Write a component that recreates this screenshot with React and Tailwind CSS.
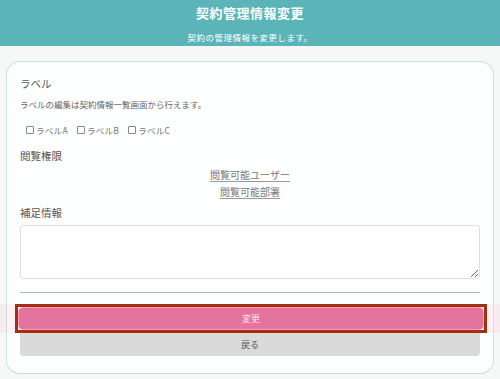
export default function App() {
  return (
    <div className="w-[500px] h-[379px] bg-[#f6f7f7] overflow-hidden font-['Noto_Sans_CJK_JP','Noto_Sans',sans-serif] text-[#555]">
      <header className="h-[46px] bg-[#5bb5b8] flex flex-col items-center text-white">
        <h1 className="mt-[3px] text-[13px] font-bold leading-[20px] tracking-[0.5px]">契約管理情報変更</h1>
        <p className="mt-[8px] text-[8.5px] leading-[12px] tracking-[0.5px]">契約の管理情報を変更します。</p>
      </header>

      <main className="px-[6px] pt-[15px]">
        <div className="rounded-[14px] border border-[#c6e6e3] border-b-[#cfd6dc] bg-[#fdfefe] px-[13px] pt-[14px] pb-[17px]">
          <p className="text-[10.5px] leading-[16px]">ラベル</p>
          <p className="mt-[5px] text-[8.5px] leading-[14px] text-[#666]">ラベルの編集は契約情報一覧画面から行えます。</p>

          <div className="mt-[12px] pl-[6px] flex items-center gap-[9px] text-[8.5px] leading-[14px] text-[#777]">
            {['ラベルA', 'ラベルB', 'ラベルC'].map((l) => (
              <label key={l} className="flex items-center gap-[2px] tracking-[0.3px]">
                <span className="w-[8px] h-[8px] border border-[#888] rounded-[1px] bg-white" />
                {l}
              </label>
            ))}
          </div>

          <p className="mt-[11px] text-[10.5px] leading-[16px]">閲覧権限</p>
          <div className="mt-[2px] flex flex-col items-center text-[10px] leading-[17px] text-[#777]">
            <a className="underline underline-offset-2 decoration-[#999]">閲覧可能ユーザー</a>
            <a className="underline underline-offset-2 decoration-[#999]">閲覧可能部署</a>
          </div>

          <p className="mt-[5px] text-[10.5px] leading-[16px]">補足情報</p>
          <textarea className="mt-[4px] block w-full h-[54px] rounded-[3px] border border-[#e0e0e0] bg-white resize-y" />

          <div className="mt-[13px] h-px bg-[#aab6c4]" />

          <div className="mt-[11px] -ml-[5px] -mr-[7px] border-[3px] border-[#a3300f] p-[1px] shadow-[-16px_0_0_0_rgba(255,190,215,0.2),16px_0_0_0_rgba(255,190,215,0.2)]">
            <button className="block w-full h-[21px] rounded-[4px] bg-[#e4739e] text-[9px] text-[#fbe3ec] ring-1 ring-[#ff9cc6]">変更</button>
          </div>
          <button className="block w-full h-[23px] rounded-b-[4px] bg-[#dadada] text-[9px] text-[#555]">戻る</button>
        </div>
      </main>
    </div>
  )
}
